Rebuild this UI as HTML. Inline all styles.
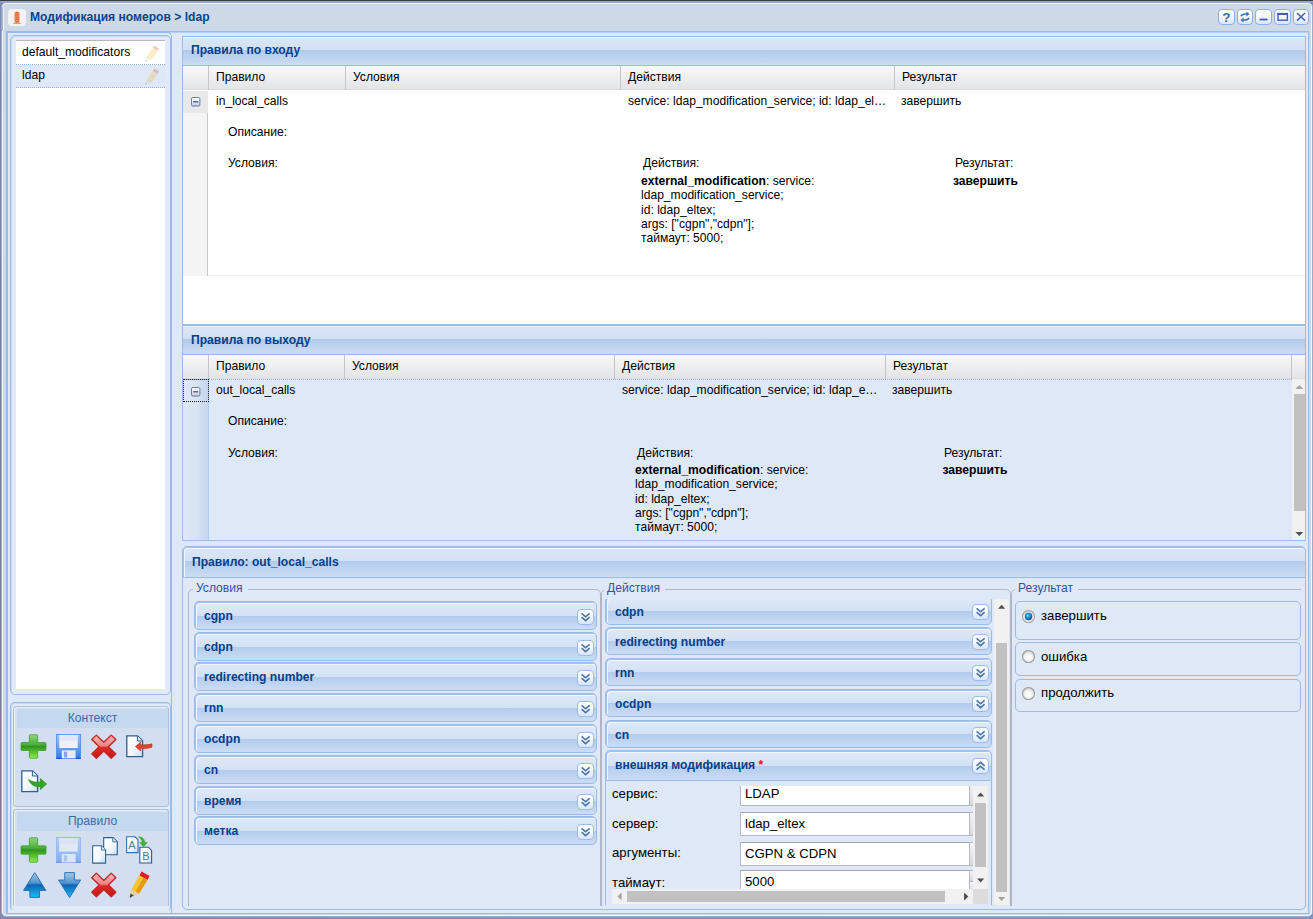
<!DOCTYPE html>
<html><head><meta charset="utf-8"><title>Модификация номеров</title>
<style>
*{box-sizing:border-box;margin:0;padding:0}
html,body{width:1313px;height:919px;overflow:hidden}
body{font-family:"Liberation Sans",sans-serif;font-size:12.1px;color:#000;position:relative;
 background:linear-gradient(180deg,#3a3a44 0,#3a3a44 1px,#94a5c6 1px,#94a5c6 2px,#7a88b6 3px,#7a80a9 250px,#7c82ac 860px,#8095b9 919px)}
.abs{position:absolute}
#deskr{left:1312px;top:2px;width:1px;height:917px;background:linear-gradient(180deg,#5b7ab8,#7d97c0)}
#deskb{left:0;top:917px;width:1313px;height:2px;background:linear-gradient(90deg,#8a84ae,#8294bd 40%,#8095b9)}
#win{left:1px;top:2px;width:1312px;height:915px;background:#ced9e7;border:1px solid #9cabc6;border-radius:5px;box-shadow:inset 0 0 0 1px #f3f6fb}
#wbody{left:6px;top:31px;width:1303px;height:883px;background:#dfe8f6;border:1px solid #99bbe8;box-shadow:inset 1px 0 0 #99bbe8,inset 0 1px 0 rgba(153,187,232,.55)}
.t12b{font-weight:bold;color:#04408c;white-space:nowrap}
.hdr{background:linear-gradient(180deg,#dbe7f6 0,#d0e0f3 45%,#aec8ec 46%,#b3cbed 52%,#cbddf3 100%)}
.ghd{background:linear-gradient(180deg,#f9f9f9 0,#e3e4e6 100%);border-bottom:1px solid #dcdddf}
.gh{position:absolute;top:0;height:24px;line-height:23px;padding-left:7px;border-right:1px solid #c5c5c5;white-space:nowrap;overflow:hidden}
.c{position:absolute;white-space:nowrap;line-height:14px}
.b{font-weight:bold}
</style></head><body>
<div class="abs" id="deskb"></div><div class="abs" style="left:0;top:3px;width:3px;height:916px;background:linear-gradient(180deg,#7a88b6 0,#7a80a9 250px,#7d739f 860px,#8a84ae 916px)"></div>
<div class="abs" id="win"></div>
<div class="abs" style="left:2px;top:7px;width:1px;height:24px;background:#a3b2cb"></div><div class="abs" style="left:3px;top:7px;width:1px;height:24px;background:#eef3fb"></div>
<div class="abs" id="wbody"></div>
<!-- title bar -->
<svg class="abs" style="left:8px;top:9px" width="18" height="17" viewBox="0 0 18 17">
 <rect x="0" y="0" width="18" height="17" rx="4" fill="#f3f3f2"/>
 <rect x="6.6" y="2.8" width="4.8" height="11" rx="1.6" fill="#f0643c"/>
 <rect x="6.6" y="4.4" width="4.8" height="1" fill="#f7a27a" opacity=".8"/>
 <rect x="6.6" y="6.6" width="4.8" height="1" fill="#f7a27a" opacity=".8"/>
 <rect x="6.6" y="8.8" width="4.8" height="1" fill="#f7a27a" opacity=".8"/>
 <rect x="6.6" y="11" width="4.8" height="1" fill="#f7a27a" opacity=".8"/>
 <rect x="5.2" y="13.8" width="7.6" height="1" fill="#7dbb5a"/>
</svg>
<div class="abs t12b" style="left:30px;top:9px;line-height:16px;color:#0a4393">Модификация номеров &gt; ldap</div>
<style>
.tool{position:absolute;top:9px;width:17px;height:16px;border:1px solid #8fb0e4;border-radius:4px;background:linear-gradient(180deg,#ffffff 0,#f4f8fe 45%,#d9e7fb 100%)}
.tool svg{position:absolute;left:0;top:0}
</style>
<div class="tool" style="left:1218px"><svg width="15" height="14" viewBox="0 0 15 14"><text x="7.4" y="12" text-anchor="middle" font-family="Liberation Sans" font-weight="bold" font-size="13.5" fill="#47679f">?</text></svg></div>
<div class="tool" style="left:1237px;width:16px"><svg width="14" height="14" viewBox="0 0 14 14"><g fill="none" stroke="#4a72a8" stroke-width="1.7"><path d="M3.2 6.2 C3.6 4.4 5 3.8 9 4"/><path d="M10.8 7.8 C10.4 9.6 9 10.2 5 10"/></g><path d="M8.4 1.6 L11.6 4 L8.4 6.4Z" fill="#4a72a8"/><path d="M5.6 7.6 L2.4 10 L5.6 12.4Z" fill="#4a72a8"/></svg></div>
<div class="tool" style="left:1255px"><svg width="15" height="14" viewBox="0 0 15 14"><rect x="3.6" y="8.6" width="8" height="1.8" fill="#4858ae"/></svg></div>
<div class="tool" style="left:1274px"><svg width="15" height="14" viewBox="0 0 15 14"><rect x="3" y="3.6" width="9.4" height="6.6" fill="none" stroke="#4858ae" stroke-width="1.4"/><rect x="2.4" y="3" width="10.6" height="2" fill="#4858ae"/></svg></div>
<div class="tool" style="left:1293px;width:16px"><svg width="14" height="14" viewBox="0 0 14 14"><path d="M3 3 L11 10.6 M11 3 L3 10.6" stroke="#4a60b0" stroke-width="1.5" fill="none"/></svg></div>

<!-- left column -->
<svg width="0" height="0" style="position:absolute"><defs>
<g id="pencil">
 <path d="M10.4 .4 L15 3.4 L13.4 6 L8.8 3Z" fill="#e0303a"/>
 <path d="M8.8 3 L13.4 6 L7 15 L2.4 12.2Z" fill="#f5c029"/>
 <path d="M11.2 4.6 L13.4 6 L7 15 L4.8 13.6Z" fill="#e8b838"/>
 <path d="M2.4 12.2 L7 15 L1 17Z" fill="#d9cdb6"/>
 <path d="M1.8 14.8 L3.6 16 L1 17Z" fill="#6a7a8a"/>
</g>
</defs></svg>
<div class="abs" style="left:7px;top:32px;width:165px;height:881px;border-right:1px solid #99bbe8;border-top:1px solid #99bbe8;border-radius:0 5px 0 0"></div>
<div class="abs" style="left:10px;top:35px;width:161px;height:660px;border:1px solid #99bbe8;border-radius:5px;background:#e2eaf7;box-shadow:inset 1px 1px 0 rgba(153,187,232,.35)"></div>
<div class="abs" style="left:16px;top:40px;width:149px;height:649px;background:#fff;border-top:1px solid #b9b9b9">
 <div style="height:24px;line-height:22px;padding-left:6px;border-bottom:1px dotted #8db2e3">default_modificators</div>
 <div style="height:23px;line-height:21px;padding-left:6px;border-bottom:1px dotted #8db2e3;background:#dfe8f6">ldap</div>
</div>
<svg class="abs" style="left:144px;top:45px;opacity:.27" width="16" height="18" viewBox="0 0 16 18"><use href="#pencil"/></svg>
<svg class="abs" style="left:144px;top:68px;opacity:.27" width="16" height="18" viewBox="0 0 16 18"><use href="#pencil"/></svg>

<div class="abs" style="left:10px;top:702px;width:161px;height:208px;border:1px solid #99bbe8;border-bottom:none;border-radius:5px 5px 3px 3px;background:#e2eaf7;box-shadow:inset 1px 1px 0 rgba(153,187,232,.35)"></div>
<div class="abs" style="left:13px;top:706px;width:156px;height:101px;border:1px solid #aebfd6;border-radius:3px;background:#d3dff0;box-shadow:inset 1px 1px 0 #e6eef8"></div>
<div class="abs" style="left:17px;top:709px;width:151px;height:19px;background:#c4d8f0;text-align:center;line-height:18px;color:#4068ac">Контекст</div>
<div class="abs" style="left:13px;top:809px;width:156px;height:97px;border:1px solid #aebfd6;border-bottom:none;border-radius:3px 3px 0 0;background:#d3dff0;box-shadow:inset 1px 1px 0 #e6eef8"></div>
<div class="abs" style="left:17px;top:812px;width:151px;height:19px;background:#c4d8f0;text-align:center;line-height:18px;color:#4068ac">Правило</div>
<svg width="0" height="0" style="position:absolute"><defs>
<linearGradient id="gG" x1="0" y1="0" x2="0" y2="1"><stop offset="0" stop-color="#8fd67e"/><stop offset=".42" stop-color="#4cae3a"/><stop offset=".5" stop-color="#2f9420"/><stop offset="1" stop-color="#8af04a"/></linearGradient>
<linearGradient id="gR" x1="0" y1="0" x2="0" y2="1"><stop offset="0" stop-color="#f6b8b8"/><stop offset=".46" stop-color="#ee8484"/><stop offset=".54" stop-color="#dc2a2a"/><stop offset="1" stop-color="#c81616"/></linearGradient>
<linearGradient id="gB" x1="0" y1="0" x2="0" y2="1"><stop offset="0" stop-color="#a9c9e6"/><stop offset=".42" stop-color="#4f94cf"/><stop offset=".5" stop-color="#0f63b4"/><stop offset="1" stop-color="#16c0fa"/></linearGradient>
<linearGradient id="gF" x1="0" y1="0" x2="0" y2="1"><stop offset="0" stop-color="#9fc0f4"/><stop offset=".6" stop-color="#5f9cf0"/><stop offset="1" stop-color="#2f78ee"/></linearGradient>
<linearGradient id="gD" x1="0" y1="0" x2="1" y2="1"><stop offset="0" stop-color="#ffffff"/><stop offset=".6" stop-color="#f2f7fd"/><stop offset="1" stop-color="#c4daf4"/></linearGradient>
<g id="iplus"><path d="M9.7 0.8 H16.3 a1 1 0 0 1 1 1 V9.1 H25 a1 1 0 0 1 1 1 V16.7 a1 1 0 0 1 -1 1 H17.3 V25 a1 1 0 0 1 -1 1 H9.7 a1 1 0 0 1 -1 -1 V17.7 H1 a1 1 0 0 1 -1 -1 V10.1 a1 1 0 0 1 1 -1 H8.7 V1.8 a1 1 0 0 1 1 -1Z" fill="url(#gG)" stroke="#3a9a2a" stroke-width=".8"/></g>
<g id="ifloppy"><rect x=".4" y=".4" width="25.2" height="25.2" fill="url(#gF)" stroke="#4a8af0" stroke-width=".8"/><rect x="0" y="24.6" width="26" height="1.4" fill="#1a56e0"/>
 <rect x="3.4" y="1" width="19.2" height="13.6" fill="#eef1fc"/><rect x="3.4" y="1" width="19.2" height="6" fill="#dfe4f8" opacity=".8"/>
 <rect x="6" y="17" width="14.4" height="8.4" fill="#e6ebfa"/><rect x="8.2" y="18.4" width="3.4" height="6" fill="#7fa6ea"/></g>
<g id="ix"><path d="M25.23 5.83 L17.67 13.40 L25.23 20.97 L20.57 25.63 L13.00 18.07 L5.43 25.63 L0.77 20.97 L8.33 13.40 L0.77 5.83 L5.43 1.17 L13.00 8.73 L20.57 1.17Z" fill="url(#gR)" stroke="#c52424" stroke-width="1.4" stroke-linejoin="round"/></g>
<g id="idoc"><path d="M.8 .8 H11.6 L16.6 5.8 V21.6 H.8Z" fill="url(#gD)" stroke="#2e5f8a" stroke-width="1.3"/><path d="M11.4 1 V6 H16.4" fill="#dfeaf6" stroke="#2e5f8a" stroke-width="1"/></g>
<g id="iup"><path d="M13 .6 L25.4 18.4 H18.4 V25.4 H7.6 V18.4 H.6Z" fill="url(#gB)" stroke="#1565b0" stroke-width=".9" stroke-linejoin="round"/></g>
<g id="idown"><path d="M7.6 .6 H18.4 V8 H25.4 L13 25.6 L.6 8 H7.6Z" fill="url(#gB)" stroke="#1565b0" stroke-width=".9" stroke-linejoin="round"/></g>
</defs></svg>
<style>.ic{position:absolute;overflow:visible}</style>
<!-- Контекст row 1 -->
<svg class="ic" style="left:21px;top:734px" width="25" height="25" viewBox="0 0 26 26.8" preserveAspectRatio="none"><use href="#iplus"/></svg>
<svg class="ic" style="left:56px;top:734px" width="25" height="25" viewBox="0 0 26 26" preserveAspectRatio="none"><use href="#ifloppy"/></svg>
<svg class="ic" style="left:91px;top:734px" width="25.6" height="25.4" viewBox="0 0 26 26.8" preserveAspectRatio="none"><use href="#ix"/></svg>
<svg class="ic" style="left:126px;top:735px" width="27" height="23" viewBox="0 0 27 23"><use href="#idoc"/><path d="M26 12.2 C21 13.8 17 13.6 14.6 13.2 V16 L9.4 11.6 L14.6 7 V9.6 C18 10 22 10 26 8.8Z" fill="#e2432c" stroke="#c02a1c" stroke-width=".6"/></svg>
<svg class="ic" style="left:21px;top:770px" width="27" height="23" viewBox="0 0 27 23"><use href="#idoc"/><path d="M7.6 9.6 C11 12.4 16 12.6 19.4 12 V8.6 L25.6 14 L19.4 19.6 V16.4 C14 17.4 9.6 15 7.6 9.6Z" fill="#35a81e" stroke="#238012" stroke-width=".6"/></svg>
<!-- Правило row 1 -->
<svg class="ic" style="left:21px;top:837px" width="25" height="26" viewBox="0 0 26 26.8" preserveAspectRatio="none"><use href="#iplus"/></svg>
<div class="abs" style="left:52px;top:832px;width:34px;height:35px;border:1px solid #d7dee9;border-radius:3px;opacity:.8"></div>
<svg class="ic" style="left:56px;top:837px;opacity:.5" width="25" height="26" viewBox="0 0 26 26" preserveAspectRatio="none"><use href="#ifloppy"/></svg>
<svg class="ic" style="left:92px;top:837px" width="26" height="27" viewBox="0 0 26 27"><g transform="translate(11,0) scale(.86,.82)"><use href="#idoc"/></g><g transform="translate(0,8) scale(.82,.84)"><use href="#idoc"/></g></svg>
<svg class="ic" style="left:126px;top:836px" width="27" height="28" viewBox="0 0 27 28">
 <path d="M.6 .8 H9 L12 3.8 V16.6 H.6Z" fill="url(#gD)" stroke="#3a6fb0" stroke-width="1.1"/>
 <path d="M13.8 11.2 H22.4 L25.6 14.4 V27 H13.8Z" fill="url(#gD)" stroke="#2a5f9a" stroke-width="1.1"/>
 <text x="6" y="13" text-anchor="middle" font-family="Liberation Sans" font-size="11" fill="#4a7f98">A</text>
 <text x="19.8" y="24.4" text-anchor="middle" font-family="Liberation Sans" font-size="11" fill="#4a7f98">B</text>
 <path d="M12.6 .8 C17 1 18.6 3.6 18.6 6.4 H21.4 L17.6 10.8 L13.6 6.4 H16.2 C16.2 4.4 15 2.4 12.6 .8Z" fill="#3cb82a" stroke="#2a9a1c" stroke-width=".5"/>
</svg>
<!-- Правило row 2 -->
<svg class="ic" style="left:22.6px;top:872px" width="23.4" height="26" viewBox="0 0 26 26" preserveAspectRatio="none"><use href="#iup"/></svg>
<svg class="ic" style="left:57.8px;top:872px" width="23.2" height="26" viewBox="0 0 26 26" preserveAspectRatio="none"><use href="#idown"/></svg>
<svg class="ic" style="left:91px;top:872px" width="25.6" height="26" viewBox="0 0 26 26.8" preserveAspectRatio="none"><use href="#ix"/></svg>
<svg class="ic" style="left:128px;top:871px" width="23" height="28" viewBox="0 0 23 28">
 <path d="M13.6 .6 L21.6 5 L19.4 9 L11.4 4.6Z" fill="#e31b23"/>
 <path d="M11.4 4.6 L19.4 9 L11 22.8 L3.4 18.6Z" fill="#f8c62a"/>
 <path d="M15.4 6.8 L19.4 9 L11 22.8 L7.4 20.8Z" fill="#e59a14"/>
 <path d="M3.4 18.6 L11 22.8 L1.6 27Z" fill="#e6cfa8"/>
 <path d="M2.6 22.6 L5.8 24.6 L1.6 27Z" fill="#3f4650"/>
</svg>


<!-- Panel 1 -->
<svg width="0" height="0" style="position:absolute"><defs>
<linearGradient id="gE" x1="0" y1="0" x2="0" y2="1"><stop offset="0" stop-color="#ffffff"/><stop offset=".5" stop-color="#e4e9f4"/><stop offset="1" stop-color="#b9c5dc"/></linearGradient>
<g id="iexp"><rect x=".5" y=".5" width="8.4" height="8.6" rx="1.4" fill="url(#gE)" stroke="#5b74a0" stroke-width=".9"/><rect x="2.2" y="4" width="5" height="1.5" fill="#56698f"/></g>
</defs></svg>
<div class="abs" style="left:182px;top:36px;width:1124px;height:289px;border:1px solid #99bbe8;background:#fff"></div>
<div class="abs hdr t12b" style="left:183px;top:37px;width:1122px;height:29px;border-bottom:1px solid #99bbe8;padding-left:8px;line-height:27px;box-shadow:inset 0 1px 0 #eef4fb">Правила по входу</div>
<div class="abs ghd" style="left:183px;top:66px;width:1122px;height:24px">
 <div class="gh" style="left:0;width:26px"></div>
 <div class="gh" style="left:26px;width:137px">Правило</div>
 <div class="gh" style="left:163px;width:275px">Условия</div>
 <div class="gh" style="left:438px;width:274px">Действия</div>
 <div class="gh" style="left:712px;width:410px;border-right:none">Результат</div>
</div>
<div class="abs" style="left:183px;top:91px;width:25px;height:185px;background:#f4f4f4;border-right:1px solid #c9c9c9"></div>
<div class="abs" style="left:183px;top:91px;width:25px;height:22px;background:#e9e9e9"></div>
<div class="abs" style="left:208px;top:275px;width:1097px;height:1px;background:#ededed"></div>
<svg class="abs" style="left:191px;top:97px" width="10" height="10" viewBox="0 0 10 10"><use href="#iexp"/></svg>
<div class="c" style="left:216px;top:94px">in_local_calls</div>
<div class="c" style="left:628px;top:94px">service: ldap_modification_service; id: ldap_el…</div>
<div class="c" style="left:901px;top:94px">завершить</div>
<div class="c" style="left:228px;top:125px">Описание:</div>
<div class="c" style="left:228px;top:156px">Условия:</div>
<div class="c" style="left:643px;top:156px">Действия:</div>
<div class="c" style="left:955px;top:156px">Результат:</div>
<div class="c" style="left:641px;top:174px;line-height:14.3px;white-space:normal;width:260px"><span class="b">external_modification</span>: service:<br>ldap_modification_service;<br>id: ldap_eltex;<br>args: ["cgpn","cdpn"];<br>таймаут: 5000;</div>
<div class="c b" style="left:953px;top:174px">завершить</div>

<!-- Panel 2 -->
<div class="abs" style="left:182px;top:325px;width:1124px;height:216px;border:1px solid #99bbe8;background:#dfe8f6"></div>
<div class="abs hdr t12b" style="left:183px;top:326px;width:1122px;height:29px;border-bottom:1px solid #99bbe8;padding-left:8px;line-height:29px;box-shadow:inset 0 1px 0 #eef4fb">Правила по выходу</div>
<div class="abs ghd" style="left:183px;top:355px;width:1122px;height:24px">
 <div class="gh" style="left:0;width:26px"></div>
 <div class="gh" style="left:26px;width:136px">Правило</div>
 <div class="gh" style="left:162px;width:270px">Условия</div>
 <div class="gh" style="left:432px;width:271px">Действия</div>
 <div class="gh" style="left:703px;width:406px">Результат</div>
</div>
<div class="abs" style="left:183px;top:379px;width:1109px;height:161px;background:#dfe8f6;border-top:1px dotted #93b2e6"></div>
<div class="abs" style="left:183px;top:380px;width:26px;height:160px;background:linear-gradient(90deg,#e1e9f6 0,#d7e2f3 55%,#c6d6ee 100%);border-right:1px solid #aaccf6"></div>
<div class="abs" style="left:183px;top:379px;width:26px;height:23px;border:1px dotted #222"></div>
<svg class="abs" style="left:191px;top:387px" width="10" height="10" viewBox="0 0 10 10"><use href="#iexp"/></svg>
<div class="c" style="left:216px;top:383px">out_local_calls</div>
<div class="c" style="left:622px;top:383px">service: ldap_modification_service; id: ldap_e…</div>
<div class="c" style="left:892px;top:383px">завершить</div>
<div class="c" style="left:228px;top:414px">Описание:</div>
<div class="c" style="left:228px;top:446px">Условия:</div>
<div class="c" style="left:637px;top:446px">Действия:</div>
<div class="c" style="left:944px;top:446px">Результат:</div>
<div class="c" style="left:635px;top:463px;line-height:14.3px;white-space:normal;width:260px"><span class="b">external_modification</span>: service:<br>ldap_modification_service;<br>id: ldap_eltex;<br>args: ["cgpn","cdpn"];<br>таймаут: 5000;</div>
<div class="c b" style="left:942.5px;top:463px">завершить</div>
<!-- scrollbar -->
<div class="abs" style="left:1292px;top:379px;width:13px;height:161px;background:#f1f1f1"></div>
<div class="abs" style="left:1294px;top:394px;width:11px;height:117px;background:#c1c1c1"></div>
<svg class="abs" style="left:1292px;top:379px" width="13" height="161" viewBox="0 0 13 161"><path d="M3.4 10 L7.4 6 L11.4 10Z" fill="#a3a3a3"/><path d="M3.4 153 L7.4 157 L11.4 153Z" fill="#505050"/></svg>

<!-- Panel 3 -->
<style>
.fhdr{background:linear-gradient(180deg,#dbe7f6 0,#d1e0f3 45%,#b0c9ed 46%,#b6cdee 52%,#cbddf3 100%)}
.acc{position:absolute;height:29px;border:1px solid #99bbe8;border-radius:5px;box-shadow:inset 1px 1px 0 #a4c2ec,inset 2px 2px 0 #f2f6fc;padding-left:9px;line-height:29px;background:linear-gradient(180deg,#dfeaf7 0,#d3e1f4 50%,#b1caed 52%,#b6cdee 58%,#cbddf3 100%);font-weight:bold;color:#04408c;white-space:nowrap}
.acc2{height:28px;line-height:28px}
.tl{position:absolute;right:2px;top:7px;width:17px;height:16px;border:1px solid #9dbbe8;border-radius:4px;background:linear-gradient(180deg,#fff 0,#f2f7fe 45%,#d6e6fb 100%)}
.acc2 .tl{top:6px}
.tl svg{position:absolute;left:0;top:0}
.fs{position:absolute;border:1px solid #b3b5c6;border-radius:5px}
.lg{position:absolute;top:581px;line-height:14px;background:#dfe8f6;color:#2d55a4;padding:0 5px 0 3px;white-space:nowrap}
.rb{position:absolute;left:1015px;width:286px;border:1px solid #99bbe8;border-radius:5px}
.rad{position:absolute;left:1022px;width:13px;height:13px;border-radius:50%;border:1px solid #8a8a8a;background:radial-gradient(circle at 50% 40%,#fdfdfd 0,#f0f0f0 45%,#c8c8c8 100%);box-shadow:inset 0 1px 1px rgba(0,0,0,.25)}
.f13{position:absolute;font-size:13.2px;line-height:15px;white-space:nowrap}
.inp{position:absolute;left:740px;width:230px;height:24px;background:#fff;border:1px solid #b5b8c8;border-top-color:#a3a6b8;font-size:13.2px;line-height:21px;padding-left:4px;white-space:nowrap}
.trg{position:absolute;left:969px;width:5px;height:24px;background:linear-gradient(180deg,#f4f4f4 0,#d8d8d8 100%);border-top:1px solid #b5b8c8;border-bottom:1px solid #b5b8c8;border-left:1px solid #b5b8c8}
</style>
<svg width="0" height="0" style="position:absolute"><defs>
<g id="chd" fill="none" stroke="#4a74a6" stroke-width="1.6"><path d="M3.6 3.4 L7.6 6.8 L11.6 3.4"/><path d="M3.6 7.2 L7.6 10.6 L11.6 7.2"/></g>
<g id="chu" fill="none" stroke="#4a74a6" stroke-width="1.6"><path d="M3.6 6.8 L7.6 3.4 L11.6 6.8"/><path d="M3.6 10.6 L7.6 7.2 L11.6 10.6"/></g>
</defs></svg>
<div class="abs" style="left:182px;top:546px;width:1124px;height:364px;border:1px solid #99bbe8;border-radius:5px;background:#dfe8f6"></div>
<div class="abs fhdr t12b" style="left:183px;top:547px;width:1122px;height:31px;border:1px solid #a4c2ec;border-right:none;border-bottom-color:#99bbe8;border-radius:4px 4px 0 0;box-shadow:inset 1px 1px 0 #f2f6fc;padding-left:8px;line-height:29px">Правило: out_local_calls</div>

<!-- fieldset Условия -->
<div class="fs" style="left:188px;top:589px;width:413px;height:330px;clip-path:inset(-8px 0 13px -2px)"></div>
<div class="lg" style="left:193px">Условия</div>
<div class="acc" style="left:194px;top:601px;width:403px">cgpn<div class="tl"><svg width="15" height="14"><use href="#chd"/></svg></div></div>
<div class="acc" style="left:194px;top:632px;width:403px">cdpn<div class="tl"><svg width="15" height="14"><use href="#chd"/></svg></div></div>
<div class="acc" style="left:194px;top:662px;width:403px">redirecting number<div class="tl"><svg width="15" height="14"><use href="#chd"/></svg></div></div>
<div class="acc" style="left:194px;top:693px;width:403px">rnn<div class="tl"><svg width="15" height="14"><use href="#chd"/></svg></div></div>
<div class="acc" style="left:194px;top:724px;width:403px">ocdpn<div class="tl"><svg width="15" height="14"><use href="#chd"/></svg></div></div>
<div class="acc" style="left:194px;top:755px;width:403px">cn<div class="tl"><svg width="15" height="14"><use href="#chd"/></svg></div></div>
<div class="acc" style="left:194px;top:786px;width:403px">время<div class="tl"><svg width="15" height="14"><use href="#chd"/></svg></div></div>
<div class="acc" style="left:194px;top:816px;width:403px">метка<div class="tl"><svg width="15" height="14"><use href="#chd"/></svg></div></div>

<!-- fieldset Действия -->
<div class="fs" style="left:601px;top:589px;width:410px;height:330px;clip-path:inset(-8px 0 13px 0)"></div>
<div class="lg" style="left:604px">Действия</div>
<div class="abs" style="left:603px;top:599px;width:391px;height:306px;overflow:hidden">
 <div class="acc acc2" style="left:2px;top:-3px;width:387px;height:29px;line-height:30px">cdpn<div class="tl" style="top:7px"><svg width="15" height="14"><use href="#chd"/></svg></div></div>
 <div class="acc acc2" style="left:2px;top:28px;width:387px">redirecting number<div class="tl"><svg width="15" height="14"><use href="#chd"/></svg></div></div>
 <div class="acc acc2" style="left:2px;top:59px;width:387px">rnn<div class="tl"><svg width="15" height="14"><use href="#chd"/></svg></div></div>
 <div class="acc acc2" style="left:2px;top:90px;width:387px">ocdpn<div class="tl"><svg width="15" height="14"><use href="#chd"/></svg></div></div>
 <div class="acc acc2" style="left:2px;top:121px;width:387px">cn<div class="tl"><svg width="15" height="14"><use href="#chd"/></svg></div></div>
 <div class="acc" style="left:2px;top:151px;width:387px;height:31px;line-height:29px;border-radius:5px 5px 0 0">внешняя модификация <span style="color:#e8102a">*</span><div class="tl" style="top:7px"><svg width="15" height="14"><use href="#chu"/></svg></div></div>
 <div style="position:absolute;left:2px;top:182px;width:387px;height:130px;border-left:1px solid #99bbe8;border-right:1px solid #99bbe8"></div>
</div>
<!-- form inside внешняя модификация -->
<div class="abs" style="left:611px;top:786px;width:362px;height:103px;overflow:hidden">
 <div class="f13" style="left:1px;top:0px">сервис:</div>
 <div class="f13" style="left:1px;top:30px">сервер:</div>
 <div class="f13" style="left:1px;top:59px">аргументы:</div>
 <div class="f13" style="left:1px;top:89px">таймаут:</div>
 <div class="inp" style="left:129px;top:-4px">LDAP</div><div class="trg" style="left:358px;top:-4px"></div>
 <div class="inp" style="left:129px;top:26px">ldap_eltex</div><div class="trg" style="left:358px;top:26px"></div>
 <div class="inp" style="left:129px;top:56px">CGPN &amp; CDPN</div><div class="trg" style="left:358px;top:56px"></div>
 <div class="inp" style="left:129px;top:84px">5000</div><div class="trg" style="left:358px;top:84px;height:12px"></div><div class="trg" style="left:358px;top:95px;height:13px"></div>
</div>
<!-- inner scrollbars -->
<div class="abs" style="left:973px;top:786px;width:15px;height:103px;background:#f1f1f1"></div>
<div class="abs" style="left:975px;top:803px;width:11px;height:64px;background:#c1c1c1"></div>
<svg class="abs" style="left:973px;top:786px" width="15" height="103"><path d="M4 10.4 L7.6 6.4 L11.2 10.4Z" fill="#505050"/><path d="M4 92.4 L7.6 96.4 L11.2 92.4Z" fill="#505050"/></svg>
<div class="abs" style="left:612px;top:889px;width:361px;height:15px;background:#f1f1f1"></div>
<div class="abs" style="left:627px;top:891px;width:318px;height:11px;background:#c1c1c1"></div>
<svg class="abs" style="left:612px;top:889px" width="361" height="15"><path d="M9.6 3.6 L5.4 7.4 L9.6 11.2Z" fill="#a3a3a3"/><path d="M352 3.4 L356.4 7.4 L352 11.4Z" fill="#505050"/></svg>
<div class="abs" style="left:973px;top:889px;width:15px;height:15px;background:#dcdcdc"></div>
<!-- outer scrollbar -->
<div class="abs" style="left:994px;top:599px;width:15px;height:306px;background:#f1f1f1;border-radius:0 3px 0 0"></div>
<div class="abs" style="left:996px;top:643px;width:11px;height:249px;background:#c1c1c1"></div>
<svg class="abs" style="left:994px;top:599px" width="15" height="306"><path d="M4 9.8 L7.6 5.8 L11.2 9.8Z" fill="#505050"/><path d="M4 298 L7.6 302 L11.2 298Z" fill="#a3a3a3"/></svg>

<!-- fieldset Результат -->
<div class="fs" style="left:1011px;top:589px;width:300px;height:330px;clip-path:inset(-8px 10px 13px 0)"></div>
<div class="lg" style="left:1015px">Результат</div>
<div class="rb" style="top:601px;height:39px"></div>
<div class="rb" style="top:642px;height:34px"></div>
<div class="rb" style="top:679px;height:33px"></div>
<svg class="abs" style="left:1021px;top:609px" width="15" height="15" viewBox="0 0 15 15"><defs><radialGradient id="rB" cx=".42" cy=".38" r=".62"><stop offset="0" stop-color="#9be6f6"/><stop offset=".3" stop-color="#2aa0dc"/><stop offset=".7" stop-color="#1478bc"/><stop offset="1" stop-color="#0b4479"/></radialGradient><linearGradient id="rR" x1="0" y1="0" x2="0" y2="1"><stop offset="0" stop-color="#d6d6d6"/><stop offset="1" stop-color="#f2f2f2"/></linearGradient></defs><circle cx="7.5" cy="7.5" r="6" fill="url(#rR)" stroke="#a4a4a4" stroke-width="1.1"/><circle cx="7.5" cy="7.5" r="3.7" fill="url(#rB)"/></svg>
<svg class="abs" style="left:1021px;top:649px" width="15" height="15" viewBox="0 0 15 15"><defs><radialGradient id="rU1" cx=".5" cy=".6" r=".6"><stop offset="0" stop-color="#ffffff"/><stop offset=".55" stop-color="#f2f2f2"/><stop offset="1" stop-color="#c9c9c9"/></radialGradient></defs><circle cx="7.5" cy="7.5" r="6" fill="url(#rU1)" stroke="#9c9c9c" stroke-width="1.1"/></svg>
<svg class="abs" style="left:1021px;top:686px" width="15" height="15" viewBox="0 0 15 15"><defs><radialGradient id="rU2" cx=".5" cy=".6" r=".6"><stop offset="0" stop-color="#ffffff"/><stop offset=".55" stop-color="#f2f2f2"/><stop offset="1" stop-color="#c9c9c9"/></radialGradient></defs><circle cx="7.5" cy="7.5" r="6" fill="url(#rU2)" stroke="#9c9c9c" stroke-width="1.1"/></svg>
<div class="f13" style="left:1041px;top:608px">завершить</div>
<div class="f13" style="left:1041px;top:649px">ошибка</div>
<div class="f13" style="left:1041px;top:685px">продолжить</div>

</body></html>
